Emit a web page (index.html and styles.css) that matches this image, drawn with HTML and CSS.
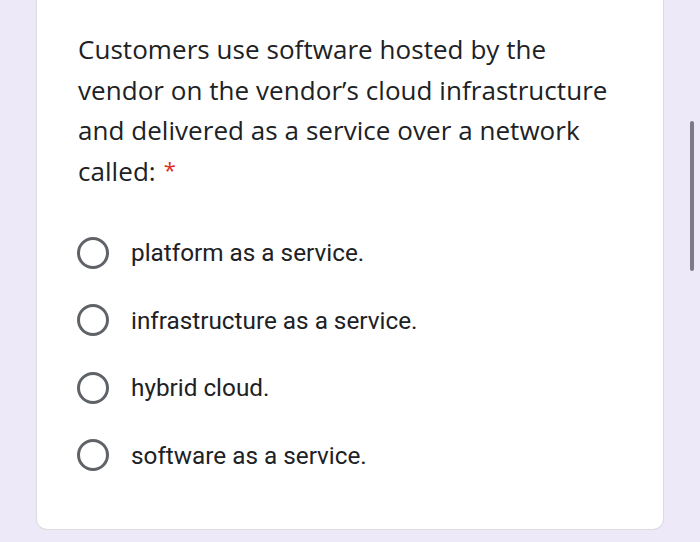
FILE: index.html
```html
<!DOCTYPE html>
<html>
<head>
<meta charset="utf-8">
<link rel="stylesheet" href="styles.css">
</head>
<body>
<div class="page">
  <div class="card">
    <div class="question">Customers use software hosted by the vendor on the vendor’s cloud infrastructure and delivered as a service over a network called:<span class="req">*</span></div>
    <div class="options">
      <div class="option"><span class="radio"></span><span class="label">platform as a service.</span></div>
      <div class="option"><span class="radio"></span><span class="label">infrastructure as a service.</span></div>
      <div class="option"><span class="radio"></span><span class="label">hybrid cloud.</span></div>
      <div class="option"><span class="radio"></span><span class="label">software as a service.</span></div>
    </div>
  </div>
  <div class="scrollbar"></div>
</div>
</body>
</html>
```
FILE: styles.css
```css
html, body {
  margin: 0;
  padding: 0;
  background: #ede9f8;
  width: 700px;
  height: 542px;
  overflow: hidden;
}
.page {
  position: relative;
  padding: 0 36px 0 36px;
  height: 542px;
  box-sizing: border-box;
}
.card {
  background: #fff;
  border: 1px solid #dadce0;
  border-top: none;
  border-radius: 0 0 11px 11px;
  height: 530px;
  box-sizing: border-box;
  padding: 29px 40px 0 41px;
}
.question {
  font-family: "Open Sans", sans-serif;
  font-size: 26px;
  line-height: 40.5px;
  letter-spacing: 0.05px;
  color: #202124;
  max-width: 545px;
}
.req {
  display: inline-block;
  color: #d93025;
  font-size: 22px;
  line-height: 1;
  margin-left: 8px;
  vertical-align: 3px;
}
.options {
  margin-top: 28px;
  display: flex;
  flex-direction: column;
}
.option {
  display: flex;
  align-items: center;
  height: 67.5px;
}
.radio {
  width: 26px;
  height: 26px;
  border: 3px solid #5f6368;
  border-radius: 50%;
  margin-left: -1px;
  margin-right: 22px;
  flex: none;
}
.label {
  font-family: Roboto, sans-serif;
  font-size: 24.3px;
  color: #202124;
}
.scrollbar {
  position: absolute;
  left: 690px;
  top: 121px;
  width: 4px;
  height: 150px;
  border-radius: 2px;
  background: #7c7a87;
}
```
